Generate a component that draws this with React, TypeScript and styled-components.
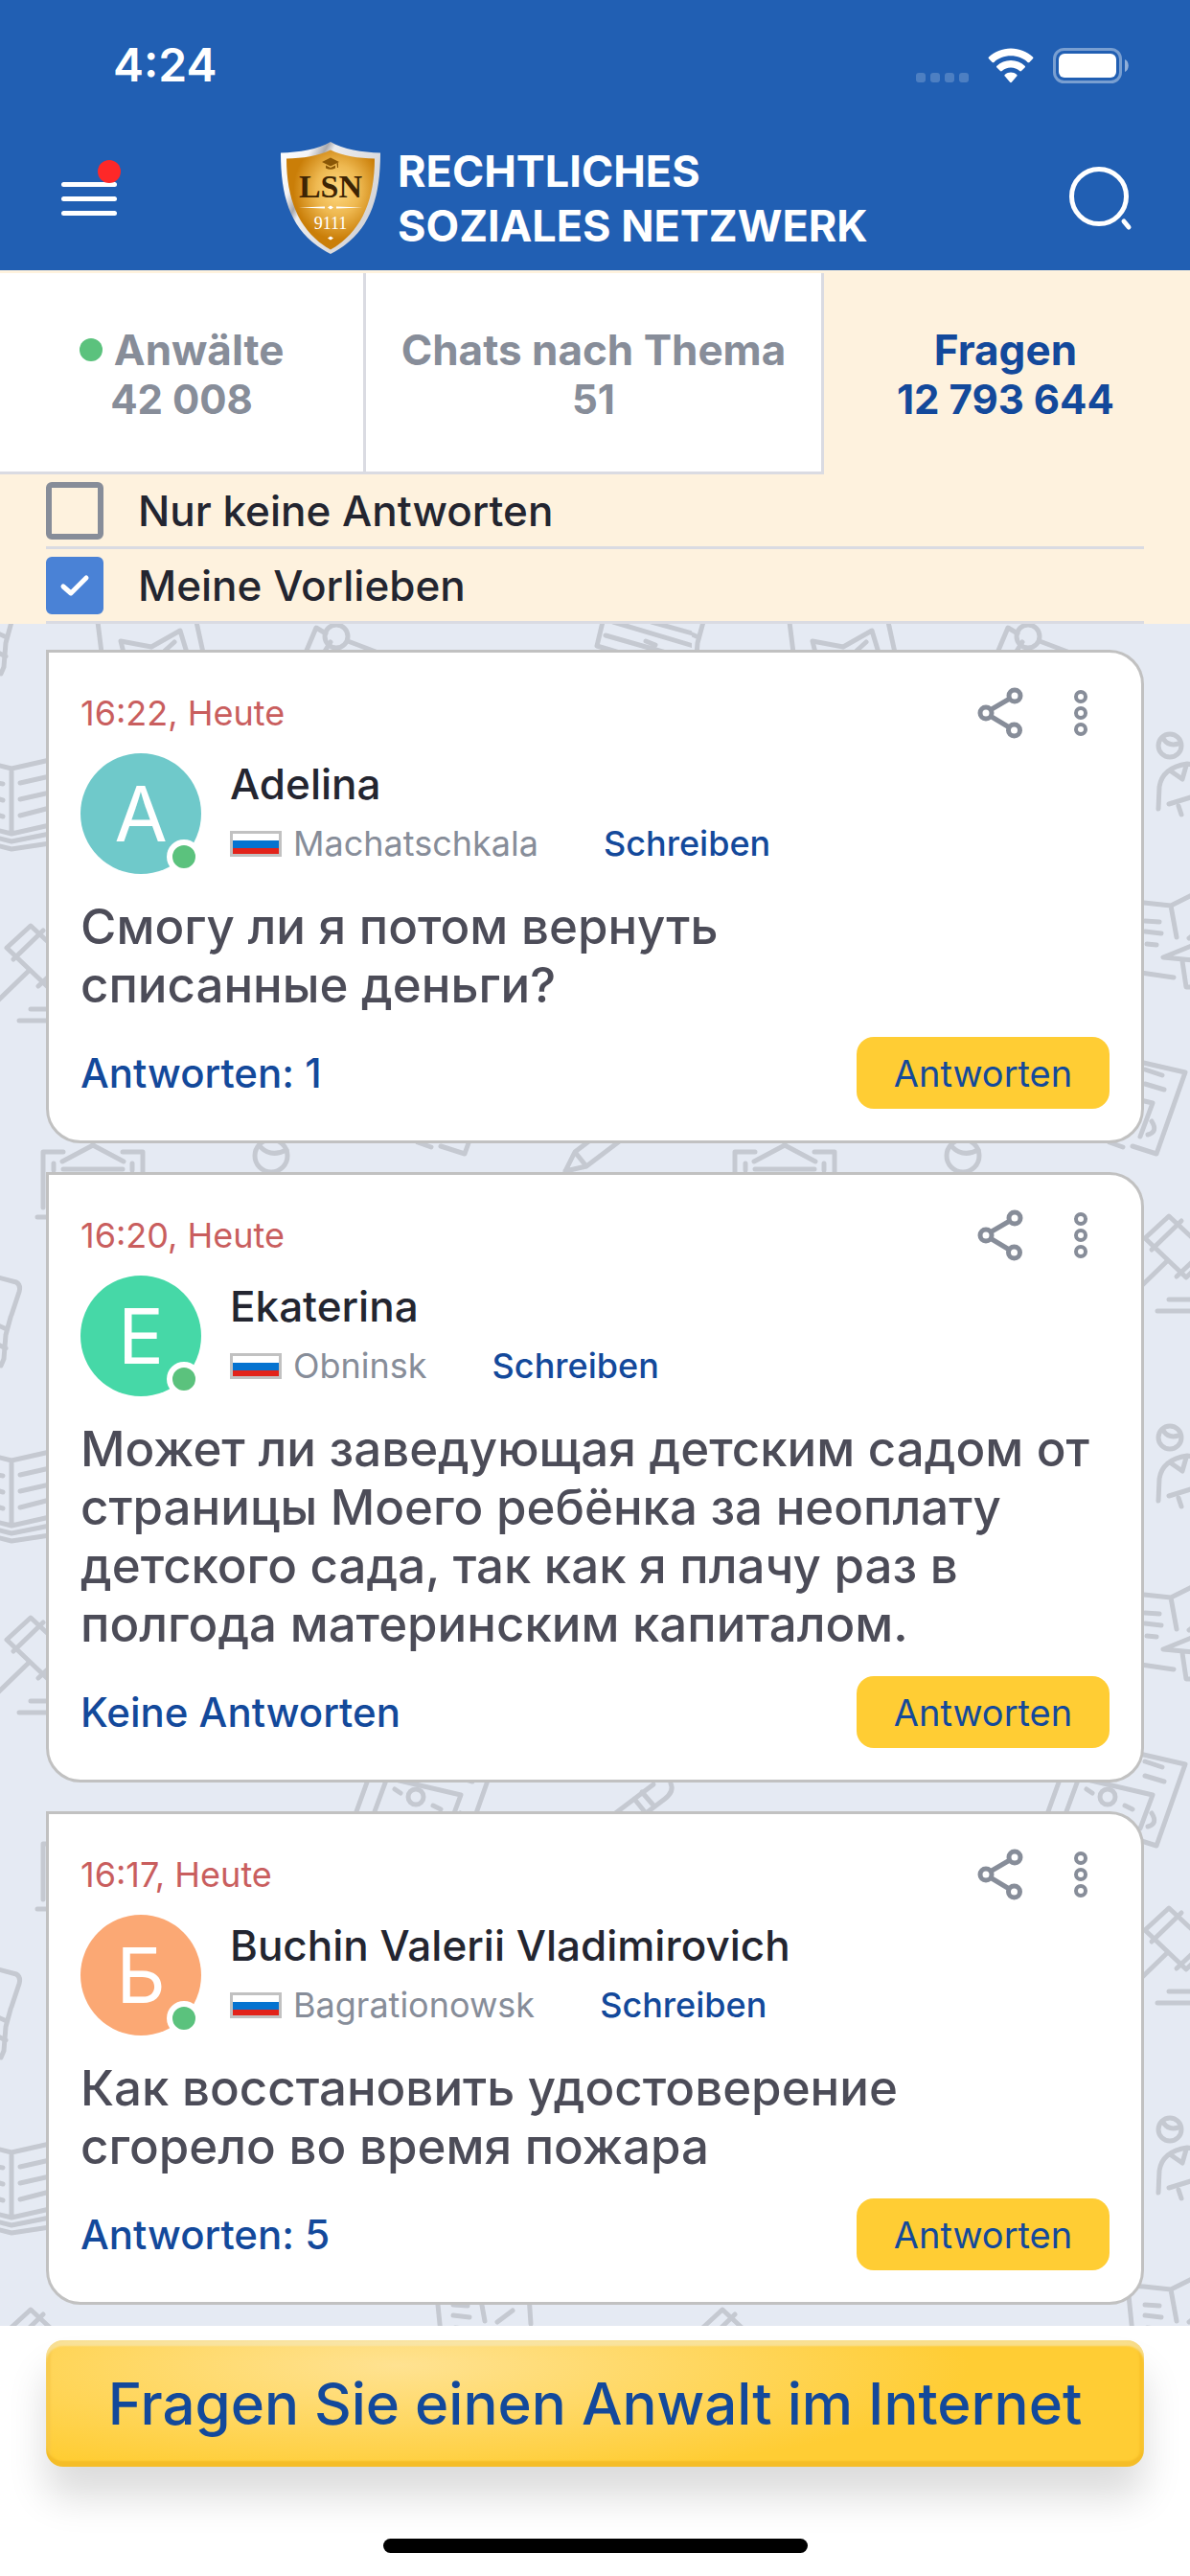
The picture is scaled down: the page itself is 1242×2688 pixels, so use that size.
import React, { useState } from 'react';
import styled, { createGlobalStyle } from 'styled-components';

const colors = {
  header: '#215fb3',
  cream: '#fef2de',
  line: '#dadbe2',
  muted: '#878d99',
  ink: '#232530',
  body: '#4c4c58',
  link: '#13499b',
  yellow: '#ffcd34',
  green: '#5bc27d',
  time: '#c95e5e',
  feed: '#e5eaf3',
  doodle: '#c5c9d1',
  cardBorder: '#c1c1c1',
};

const GlobalStyle = createGlobalStyle`
  *, *::before, *::after { box-sizing: border-box; }
  body {
    margin: 0;
    background: #fff;
    font-family: Inter, "Noto Sans", "Liberation Sans", sans-serif;
    color: ${colors.ink};
  }
  button {
    border: 0;
    padding: 0;
    background: none;
    font: inherit;
    color: inherit;
    cursor: pointer;
  }
  svg { display: block; flex: none; }
`;

const Page = styled.div`
  display: flex;
  flex-direction: column;
  min-height: 100vh;
`;

/* ---------- header ---------- */

const Header = styled.header`
  background: ${colors.header};
  color: #fff;
`;

const StatusBar = styled.div`
  display: flex;
  align-items: center;
  justify-content: space-between;
  height: 136px;
  padding: 0 64px 0 118px;
`;

const Clock = styled.span`
  font-size: 48px;
  font-weight: 600;
  line-height: 56px;
`;

const StatusIcons = styled.div`
  display: flex;
  align-items: center;
  gap: 20px;
`;

const Toolbar = styled.div`
  display: flex;
  align-items: center;
  height: 146px;
  padding: 0 60px 4px 64px;
`;

const MenuButton = styled.button`
  position: relative;
  display: flex;
  flex-direction: column;
  justify-content: center;
  gap: 10px;
  width: 62px;
  height: 80px;
`;

const MenuLine = styled.span`
  width: 58px;
  height: 5px;
  border-radius: 3px;
  background: #fff;
`;

const MenuBadge = styled.span`
  position: absolute;
  top: 0;
  right: 0;
  width: 24px;
  height: 24px;
  border-radius: 50%;
  background: #fe2828;
`;

const Brand = styled.a`
  display: flex;
  flex: 1;
  align-items: center;
  gap: 18px;
  margin-left: 167px;
  color: #fff;
  text-decoration: none;
`;

const BrandName = styled.span`
  font-size: 45px;
  font-weight: 700;
  line-height: 57px;
  white-space: nowrap;
`;

/* ---------- tabs ---------- */

const Tabs = styled.nav`
  display: grid;
  grid-template-columns: 4fr 5fr 4fr;
  padding-top: 3px;
  background: ${colors.cream};
`;

const Tab = styled.button<{ $active?: boolean }>`
  display: flex;
  flex-direction: column;
  align-items: center;
  justify-content: center;
  height: 210px;
  padding-top: 4px;
  border-right: 3px solid ${(p) => (p.$active ? 'transparent' : colors.line)};
  border-bottom: 3px solid ${(p) => (p.$active ? 'transparent' : colors.line)};
  background: ${(p) => (p.$active ? colors.cream : '#fff')};
  color: ${(p) => (p.$active ? colors.link : colors.muted)};
  font-size: 42px;
  font-weight: 700;
  line-height: 52px;
  white-space: nowrap;
`;

const TabTitle = styled.span`
  display: flex;
  align-items: center;
  gap: 12px;
  font-size: 44px;
`;

const OnlineDot = styled.span`
  width: 24px;
  height: 24px;
  border-radius: 50%;
  background: ${colors.green};
`;

/* ---------- filters ---------- */

const Filters = styled.div`
  padding: 0 48px;
  background: ${colors.cream};
`;

const FilterRow = styled.label`
  display: flex;
  align-items: center;
  gap: 36px;
  height: 78px;
  border-bottom: 3px solid ${colors.line};
  font-size: 44px;
  font-weight: 500;
  cursor: pointer;
`;

const TickBox = styled.span`
  position: relative;
  width: 60px;
  height: 60px;
`;

const Tick = styled.input`
  appearance: none;
  display: block;
  width: 60px;
  height: 60px;
  margin: 0;
  border: 6px solid ${colors.muted};
  border-radius: 6px;
  &:checked {
    border-color: #4a82d6;
    background: #4a82d6;
  }
`;

const TickMark = styled.svg`
  position: absolute;
  inset: 0;
  pointer-events: none;
`;

/* ---------- feed ---------- */

const Feed = styled.main`
  position: relative;
  background: ${colors.feed};
`;

const Backdrop = styled.svg`
  position: absolute;
  inset: 0;
  width: 100%;
  height: 100%;
`;

const CardList = styled.div`
  position: relative;
  display: flex;
  flex-direction: column;
  gap: 30px;
  padding: 27px 48px 22px;
`;

const Card = styled.article`
  padding: 36px 33px 33px;
  border: 3px solid ${colors.cardBorder};
  border-radius: 0 36px 36px 36px;
  background: #fff;
`;

const CardTop = styled.div`
  display: flex;
  align-items: center;
  height: 54px;
  margin-bottom: 15px;
`;

const Time = styled.time`
  flex: 1;
  font-size: 36px;
  color: ${colors.time};
`;

const IconButton = styled.button`
  display: flex;
  align-items: center;
  height: 54px;
  margin-left: 52px;
  color: ${colors.muted};
  &:last-child {
    margin-right: 22px;
  }
`;

const Person = styled.div`
  display: flex;
  align-items: center;
  gap: 30px;
  margin-bottom: 24px;
`;

const Avatar = styled.div<{ $color: string }>`
  position: relative;
  display: flex;
  align-items: center;
  justify-content: center;
  width: 126px;
  height: 126px;
  border-radius: 50%;
  background: ${(p) => p.$color};
  color: #fff;
  font-size: 80px;
  line-height: 96px;
`;

const Presence = styled.span`
  position: absolute;
  right: 0;
  bottom: 0;
  width: 36px;
  height: 36px;
  border: 6px solid #fff;
  border-radius: 50%;
  background: ${colors.green};
`;

const PersonText = styled.div`
  display: flex;
  flex-direction: column;
  gap: 16px;
  padding-bottom: 4px;
`;

const Name = styled.h2`
  margin: 0;
  font-size: 44px;
  font-weight: 500;
  line-height: 50px;
`;

const Place = styled.div`
  display: flex;
  align-items: center;
  font-size: 36px;
  line-height: 42px;
  color: ${colors.muted};
`;

const Flag = styled.span`
  width: 54px;
  height: 27px;
  margin-right: 12px;
  border: 3px solid ${colors.cardBorder};
  background: linear-gradient(#fff 0 7px, #0573d0 7px 15px, #e2231a 15px);
`;

const WriteLink = styled.a`
  margin-left: 68px;
  color: ${colors.link};
  font-weight: 500;
  text-decoration: none;
`;

const Question = styled.p`
  margin: 0 0 24px;
  color: ${colors.body};
  font-size: 51px;
  font-weight: 500;
  line-height: 61px;
  white-space: pre-line;
`;

const CardBottom = styled.div`
  display: flex;
  align-items: center;
  justify-content: space-between;
`;

const AnswersLink = styled.a`
  color: ${colors.link};
  font-size: 42px;
  font-weight: 500;
  text-decoration: none;
`;

const AnswerButton = styled.button`
  width: 264px;
  height: 75px;
  border-radius: 18px;
  background: ${colors.yellow};
  color: ${colors.link};
  font-size: 38px;
`;

/* ---------- footer ---------- */

const Footer = styled.footer`
  display: flex;
  flex: 1;
  flex-direction: column;
  padding: 15px 48px 24px;
  background: #fff;
`;

const AskButton = styled.button`
  height: 132px;
  border-radius: 18px;
  background: radial-gradient(ellipse 52% 90% at 32% 20%, #ffe291, ${colors.yellow}) ${colors.yellow};
  box-shadow:
    inset 0 6px 2px rgba(246, 232, 186, 0.65),
    inset 0 -6px 2px #f5bd27,
    inset 5px 0 2px rgba(245, 199, 70, 0.6),
    inset -5px 0 2px rgba(245, 189, 39, 0.6),
    0 32px 40px rgba(0, 0, 0, 0.14);
  color: ${colors.link};
  font-size: 60px;
  font-weight: 500;
  white-space: nowrap;
`;

const HomeIndicator = styled.div`
  width: 443px;
  height: 15px;
  margin: auto auto 0;
  border-radius: 8px;
  background: #000;
`;

/* ---------- drawings ---------- */

const SignalDots = () => (
  <svg width="55" height="37" viewBox="0 0 55 37" fill="#fff" fillOpacity="0.2" aria-hidden="true">
    {[0, 15, 30, 45].map((x) => (
      <rect key={x} x={x} y="26" width="10" height="10" rx="3" />
    ))}
  </svg>
);

const WifiIcon = () => (
  <svg width="48" height="37" viewBox="0 0 48 37" fill="#fff" aria-hidden="true">
    <path d="M24 .5C33 .5 41 4 47 9.5c.6.6.6 1.200 0 1.800l-3.600 3.600c-.6.6-1.300.6-1.900 0C37 10.700 31 8.300 24 8.300S11 10.700 6.500 14.900c-.6.6-1.300.6-1.900 0L1 11.300c-.6-.6-.6-1.200 0-1.800C7 4 15 .5 24 .5Z" />
    <path d="M24 13c5.700 0 10.700 2.100 14.600 5.700.6.6.6 1.200 0 1.800L35 24.100c-.6.6-1.200.6-1.800 0-2.500-2.200-5.600-3.500-9.200-3.500s-6.700 1.300-9.200 3.500c-.6.6-1.200.6-1.800 0l-3.600-3.600c-.6-.6-.6-1.200 0-1.800C13.300 15.100 18.300 13 24 13Z" />
    <path d="M24 25.500c2.300 0 4.400.8 6.100 2.200.7.6.7 1.300.1 1.900l-5.300 6.200c-.5.6-1.300.6-1.800 0l-5.300-6.200c-.6-.6-.6-1.300.1-1.900 1.700-1.400 3.800-2.200 6.100-2.200Z" />
  </svg>
);

const BatteryIcon = () => (
  <svg width="79" height="37" viewBox="0 0 79 37" aria-hidden="true">
    <rect x="1.500" y="1.500" width="69" height="34" rx="10" fill="none" stroke="#fff" strokeOpacity="0.4" strokeWidth="3" />
    <rect x="6" y="6" width="60" height="25" rx="6" fill="#fff" />
    <path d="M75 12c5 2 5 11 0 13Z" fill="#fff" fillOpacity="0.5" />
  </svg>
);

const ShieldLogo = () => (
  <svg width="104" height="118" viewBox="13 9 104 118" aria-hidden="true">
    <defs>
      <radialGradient id="gold" cx="0.58" cy="0.4" r="0.5">
        <stop offset="0" stopColor="#ffd980" />
        <stop offset="0.5" stopColor="#eeb850" />
        <stop offset="1" stopColor="#ca7e08" />
      </radialGradient>
      <linearGradient id="steel" x1="0" x2="1" y1="0" y2="0.6">
        <stop offset="0" stopColor="#fff" />
        <stop offset="0.25" stopColor="#f4f4f6" />
        <stop offset="0.36" stopColor="#a9a9ad" />
        <stop offset="0.42" stopColor="#ececee" />
        <stop offset="1" stopColor="#d2d2d6" />
      </linearGradient>
    </defs>
    <path d="M65 9C52 17 32 20 13 20.500C13 72 26 106 65 126C104 106 117 72 117 20.500C98 20 78 17 65 9Z" fill="url(#steel)" />
    <path d="M65 17.500C52 24 36 26 19 26.500C19 72 34 104 65 121.500C96 104 111 72 111 26.500C94 26 78 24 65 17.500Z" fill="url(#gold)" />
    <path d="M65 25.500l-9 4.500 9 4.500 9-4.500ZM60 33.500v3q5 2.500 10 0v-3l-5 2.500ZM71.500 31.500l.5 4.500h1v-5Z" fill="#8a5706" />
    <text x="65" y="67" textAnchor="middle" fontFamily="Liberation Serif, serif" fontWeight="700" fontSize="34" fill="#3d2404">LSN</text>
    <path d="M32 77.500l27-1v2ZM98 77.500l-27-1v2ZM65 75.500l3 2-3 2-3-2Z" fill="#fff" />
    <text x="65" y="100" textAnchor="middle" fontFamily="Liberation Serif, serif" fontSize="18" fill="#fff">9111</text>
    <path d="M65 107.500l3 2-3 2-3-2Z" fill="#fff" />
  </svg>
);

const SearchIcon = () => (
  <svg width="66" height="68" viewBox="0 0 66 68" fill="none" stroke="#fff" strokeWidth="5" strokeLinecap="round" aria-hidden="true">
    <circle cx="31" cy="32" r="28.500" />
    <path d="M57 58l5 6" />
  </svg>
);

const ShareIcon = () => (
  <svg width="48" height="54" viewBox="0 0 48 54" fill="none" stroke="currentColor" strokeWidth="5" aria-hidden="true">
    <path d="M15 23L33 12.500M15 31l17.500 10.500" />
    <circle cx="9" cy="27" r="6" />
    <circle cx="39" cy="9" r="6" />
    <circle cx="38.500" cy="45" r="6" />
  </svg>
);

const MoreIcon = () => (
  <svg width="16" height="50" viewBox="0 0 16 50" fill="none" stroke="currentColor" strokeWidth="4" aria-hidden="true">
    <circle cx="8" cy="8" r="5" />
    <circle cx="8" cy="25" r="5" />
    <circle cx="8" cy="42" r="5" />
  </svg>
);

const GAVEL =
  'M7 338L32 315L75 355L50 379ZM14 350L45 320M40 378L74 346M31 361L-2 393M32 402H72M20 414H72';

const Doodles = () => (
  <Backdrop aria-hidden="true">
    <defs>
      <pattern id="doodles" width="722" height="722" patternUnits="userSpaceOnUse">
        <g fill="none" stroke={colors.doodle} strokeWidth="5" strokeLinecap="round" strokeLinejoin="round">
          {/* scroll on the tile edge */}
          <path d="M12 -2L6 20L4 45L1 52M-2 10L7 14M-2 30L6 34M-2 682L17 687Q22 690 20 697L11 724" />
          <path d="M629 -2L623 23L660 34M632 12L695 30M640 -2L727 24M680 -2L730 12M735 -2L728 30M674 18L684 22" />
          {/* open book */}
          <path d="M12 151L52 142M12 151L-4 147M12 151V218M21 166L52 159M21 183L52 176M21 200L52 192M12 219L52 210M12 227L52 219M12 235L52 229M-4 166L3 167M-4 182L3 184M-4 199L3 201M-4 215L12 219M-4 223L12 227M-4 231L12 235" />
          {/* gavels */}
          <path d={GAVEL} />
          <path d={GAVEL} transform="translate(466 303)" />
          {/* courthouse */}
          <path d="M97 536V544L65 561M97 544L129 561M66 569H128M66 551H45V609M128 551H149V609M56 563V570M138 563V570M39 619H155" />
          <circle cx="283" cy="555" r="17" />
          <path d="M272 546Q283 557 299 549" />
          {/* flyer */}
          <path d="M102 -2L106 30M205 -2L212 30M129 30L126 18L158 24L188 7L195 30M172 28L182 19" />
          {/* compass */}
          <path d="M319 30L330 4L340 10M338 30L345 19M363 18L400 32" />
          <circle cx="351" cy="13" r="12" />
          {/* person */}
          <circle cx="499" cy="127" r="12" />
          <path d="M493 121Q498 128 508 125M487 193L488 170Q491 150 517 146L524 147M499 153L512 162L516 148M498 188L524 180M508 190L511 199" />
          {/* letter */}
          <path d="M455 290L472 291L500 294L524 282M455 290L462 360M500 294L506 327M473 310L488 311M473 321L490 323M475 334L485 335M462 363L503 369M524 335L492 348L524 351M512 352L516 379H524M519 328L535 316M552 300L554 330" />
          {/* certificate */}
          <path d="M392 462L371 520M402 442L515 468L485 553L460 545M436 541L450 546M473 465L491 471M473 480L493 486M404 482L390 520M404 482L481 500L468 535M412 494L418 498M452 511L460 515M480 519Q487 530 476 533" />
          <circle cx="434" cy="502" r="8" />
          {/* pencil */}
          <path d="M590 571L600 551L682 489M700 488Q704 496 694 504L612 566L590 571M600 551L612 566M662 504L674 519M670 497L683 512" />
        </g>
      </pattern>
    </defs>
    <rect width="100%" height="100%" fill="url(#doodles)" />
  </Backdrop>
);

/* ---------- content ---------- */

const tabs = [
  { title: 'Anwälte', count: '42 008', online: true },
  { title: 'Chats nach Thema', count: '51' },
  { title: 'Fragen', count: '12 793 644' },
];

const questions = [
  {
    time: '16:22',
    letter: 'A',
    color: '#6fc9ca',
    name: 'Adelina',
    city: 'Machatschkala',
    text: 'Смогу ли я потом вернуть\nсписанные деньги?',
    answers: 'Antworten: 1',
  },
  {
    time: '16:20',
    letter: 'E',
    color: '#46d8a7',
    name: 'Ekaterina',
    city: 'Obninsk',
    text: 'Может ли заведующая детским садом от\nстраницы Моего ребёнка за неоплату\nдетского сада, так как я плачу раз в\nполгода материнским капиталом.',
    answers: 'Keine Antworten',
  },
  {
    time: '16:17',
    letter: 'Б',
    color: '#fba874',
    name: 'Buchin Valerii Vladimirovich',
    city: 'Bagrationowsk',
    text: 'Как восстановить удостоверение\nсгорело во время пожара',
    answers: 'Antworten: 5',
  },
];

type FilterProps = { label: string; initial: boolean };

const Filter = ({ label, initial }: FilterProps) => {
  const [checked, setChecked] = useState(initial);
  return (
    <FilterRow>
      <TickBox>
        <Tick type="checkbox" checked={checked} onChange={(e) => setChecked(e.target.checked)} />
        {checked && (
          <TickMark width="60" height="60" viewBox="0 0 60 60" fill="none" stroke="#fff" strokeWidth="5" strokeLinecap="round" strokeLinejoin="round">
            <path d="M18 31l8 7 16-16" />
          </TickMark>
        )}
      </TickBox>
      {label}
    </FilterRow>
  );
};

export default function App() {
  const [active, setActive] = useState(2);
  return (
    <Page>
      <GlobalStyle />
      <Header>
        <StatusBar>
          <Clock>4:24</Clock>
          <StatusIcons>
            <SignalDots />
            <WifiIcon />
            <BatteryIcon />
          </StatusIcons>
        </StatusBar>
        <Toolbar>
          <MenuButton aria-label="Menü">
            <MenuLine />
            <MenuLine />
            <MenuLine />
            <MenuBadge />
          </MenuButton>
          <Brand href="#">
            <ShieldLogo />
            <BrandName>
              RECHTLICHES
              <br />
              SOZIALES NETZWERK
            </BrandName>
          </Brand>
          <button aria-label="Suche">
            <SearchIcon />
          </button>
        </Toolbar>
      </Header>

      <Tabs>
        {tabs.map((tab, i) => (
          <Tab key={tab.title} $active={i === active} onClick={() => setActive(i)}>
            <TabTitle>
              {tab.online && <OnlineDot />}
              {tab.title}
            </TabTitle>
            <span>{tab.count}</span>
          </Tab>
        ))}
      </Tabs>

      <Filters>
        <Filter label="Nur keine Antworten" initial={false} />
        <Filter label="Meine Vorlieben" initial />
      </Filters>

      <Feed>
        <Doodles />
        <CardList>
          {questions.map((q) => (
            <Card key={q.time}>
              <CardTop>
                <Time>{q.time}, Heute</Time>
                <IconButton aria-label="Teilen">
                  <ShareIcon />
                </IconButton>
                <IconButton aria-label="Mehr">
                  <MoreIcon />
                </IconButton>
              </CardTop>
              <Person>
                <Avatar $color={q.color}>
                  {q.letter}
                  <Presence />
                </Avatar>
                <PersonText>
                  <Name>{q.name}</Name>
                  <Place>
                    <Flag />
                    {q.city}
                    <WriteLink href="#">Schreiben</WriteLink>
                  </Place>
                </PersonText>
              </Person>
              <Question>{q.text}</Question>
              <CardBottom>
                <AnswersLink href="#">{q.answers}</AnswersLink>
                <AnswerButton>Antworten</AnswerButton>
              </CardBottom>
            </Card>
          ))}
        </CardList>
      </Feed>

      <Footer>
        <AskButton>Fragen Sie einen Anwalt im Internet</AskButton>
        <HomeIndicator />
      </Footer>
    </Page>
  );
}
